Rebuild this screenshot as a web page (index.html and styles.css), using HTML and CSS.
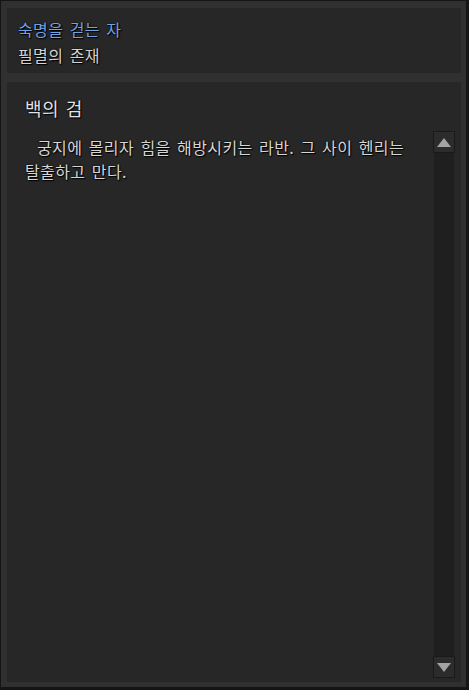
FILE: index.html
```html
<!DOCTYPE html>
<html lang="ko">
<head>
    <meta charset="UTF-8">
    <meta name="viewport" content="width=device-width, initial-scale=1.0">
    <title>필멸의 존재</title>
    <link rel="stylesheet" href="styles.css">
</head>
<body>
    <div class="frame">
        <div class="header-panel">
            <div class="quest-title">숙명을 걷는 자</div>
            <div class="quest-sub">필멸의 존재</div>
        </div>

        <div class="content-panel">
            <h2 class="chapter-title">백의 검</h2>
            <div class="scroll-area">
                <p class="story-text">궁지에 몰리자 힘을 해방시키는 라반. 그 사이 헨리는 탈출하고 만다.</p>
                <div class="scrollbar">
                    <div class="scroll-btn">
                        <svg width="14" height="9" viewBox="0 0 14 9"><polygon points="7,0 14,9 0,9" fill="#a3a3a3"/></svg>
                    </div>
                    <div class="scroll-track"></div>
                    <div class="scroll-btn">
                        <svg width="14" height="9" viewBox="0 0 14 9"><polygon points="0,0 14,0 7,9" fill="#a3a3a3"/></svg>
                    </div>
                </div>
            </div>
        </div>
    </div>
</body>
</html>
```

FILE: styles.css
```css
html, body {
    height: 100%;
}
body {
    margin: 0;
    padding: 1px 3px 3px 1px;
    box-sizing: border-box;
    background-color: #151515;
    font-family: "Noto Sans CJK KR", "Noto Sans", sans-serif;
    letter-spacing: 0.4px;
    word-spacing: 1.5px;
}
.frame {
    height: 100%;
    box-sizing: border-box;
    background-color: #303030;
    padding: 7px 5px 5px 6px;
    display: flex;
    flex-direction: column;
    gap: 9px;
}
.header-panel {
    background-color: #272727;
    padding: 8px 11px 5px;
    font-size: 16px;
    line-height: 26px;
    text-shadow: 1px 1px 1px #000, 0 0 2px #000;
}
.quest-title {
    color: #71a3e4;
}
.quest-sub {
    color: #d2d2d2;
}
.content-panel {
    flex: 1;
    background-color: #272727;
    padding: 13px 7px 4px 18px;
    display: flex;
    flex-direction: column;
    min-height: 0;
}
.chapter-title {
    margin: 0 0 10px 0;
    font-size: 18px;
    line-height: 26px;
    font-weight: normal;
    color: #e4e4e4;
    text-shadow: 1px 1px 1px #000, 0 0 2px #000;
}
.scroll-area {
    flex: 1;
    display: flex;
    gap: 8px;
    min-height: 0;
}
.story-text {
    flex: 1;
    margin: 0;
    padding-top: 4px;
    font-size: 16px;
    line-height: 24px;
    text-indent: 12px;
    word-break: keep-all;
    color: #d6d6d6;
    text-shadow: 1px 1px 1px #000, 0 0 2px #000;
}
.scrollbar {
    width: 20px;
    display: flex;
    flex-direction: column;
    background-color: #1f1f1f;
}
.scroll-track {
    flex: 1;
}
.scroll-btn {
    height: 22px;
    box-sizing: border-box;
    border: 1px solid #1a1a1a;
    background-color: #2c2c2c;
    display: flex;
    align-items: center;
    justify-content: center;
    margin: 0 -1px;
}
```
